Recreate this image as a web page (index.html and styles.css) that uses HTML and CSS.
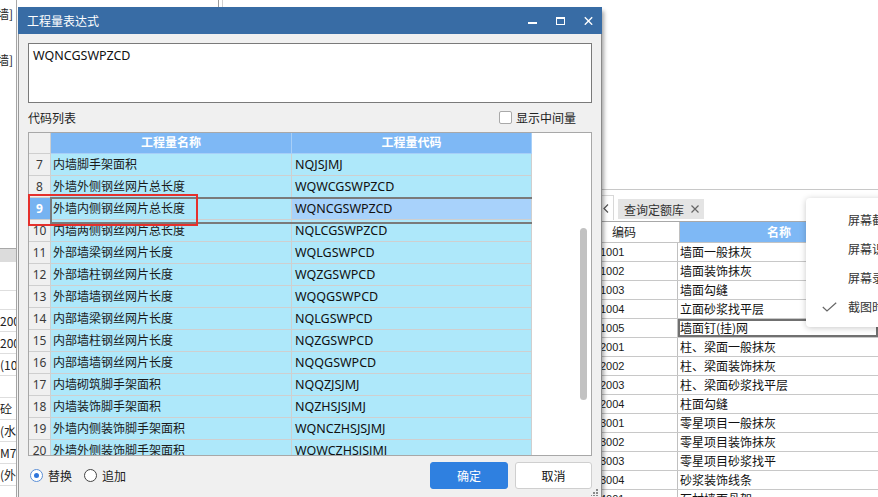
FILE: index.html
```html
<!DOCTYPE html>
<html lang="zh-CN">
<head>
<meta charset="utf-8">
<title>工程量表达式</title>
<link rel="stylesheet" href="styles.css">
</head>
<body>
<div class="desk">
  <div class="app-left">
    <div class="strip">
      <div class="s-txt s-t1">墙]</div>
      <div class="s-txt s-t2">墙]</div>
      <div class="s-band"></div>
      <div class="s-row s-b1"></div>
      <div class="s-row s-b2"></div>
      <div class="s-row">200</div>
      <div class="s-row">200</div>
      <div class="s-row">(10</div>
      <div class="s-row"></div>
      <div class="s-row">砼</div>
      <div class="s-row">(水</div>
      <div class="s-row">M7</div>
      <div class="s-row">(外</div>
    </div>
    <div class="mid"><div class="splitter"></div></div>
  </div>
  <div class="app-right">
    <div class="rp-top"></div>
    <div class="tabs">
      <div class="tab-prev"><svg width="6" height="9" viewBox="0 0 6 9"><polyline points="5,0.5 1,4.5 5,8.5" fill="none" stroke="#555" stroke-width="1.2"/></svg></div>
      <div class="tab"><span>查询定额库</span><svg class="tab-x" width="8" height="8" viewBox="0 0 8 8"><path d="M0.5 0.5 L7.5 7.5 M7.5 0.5 L0.5 7.5" stroke="#666" stroke-width="1.2"/></svg></div>
    </div>
    <div class="qtable">
      <div class="qhead"><div class="q1">编码</div><div class="q2">名称</div></div>
      <div class="qrow"><div class="q1">1001</div><div class="q2">墙面一般抹灰</div></div>
      <div class="qrow"><div class="q1">1002</div><div class="q2">墙面装饰抹灰</div></div>
      <div class="qrow"><div class="q1">1003</div><div class="q2">墙面勾缝</div></div>
      <div class="qrow"><div class="q1">1004</div><div class="q2">立面砂浆找平层</div></div>
      <div class="qrow qsel"><div class="q1">1005</div><div class="q2">墙面钉(挂)网</div></div>
      <div class="qrow"><div class="q1">2001</div><div class="q2">柱、梁面一般抹灰</div></div>
      <div class="qrow"><div class="q1">2002</div><div class="q2">柱、梁面装饰抹灰</div></div>
      <div class="qrow"><div class="q1">2003</div><div class="q2">柱、梁面砂浆找平层</div></div>
      <div class="qrow"><div class="q1">2004</div><div class="q2">柱面勾缝</div></div>
      <div class="qrow"><div class="q1">3001</div><div class="q2">零星项目一般抹灰</div></div>
      <div class="qrow"><div class="q1">3002</div><div class="q2">零星项目装饰抹灰</div></div>
      <div class="qrow"><div class="q1">3003</div><div class="q2">零星项目砂浆找平</div></div>
      <div class="qrow"><div class="q1">3004</div><div class="q2">砂浆装饰线条</div></div>
      <div class="qrow"><div class="q1">4001</div><div class="q2">石材墙面骨架</div></div>
    </div>
  </div>
</div>

<div class="dialog">
  <div class="titlebar">
    <span class="title">工程量表达式</span>
    <div class="wctl">
      <svg width="9" height="9" viewBox="0 0 9 9"><rect x="0" y="6" width="9" height="2" fill="#fff"/></svg>
      <svg width="9" height="9" viewBox="0 0 9 9"><rect x="0.5" y="1.5" width="8" height="7" fill="none" stroke="#fff"/><rect x="0" y="1" width="9" height="2" fill="#fff"/></svg>
      <svg width="9" height="9" viewBox="0 0 9 9"><path d="M0.8 1.3 L8.2 8.7 M8.2 1.3 L0.8 8.7" stroke="#fff" stroke-width="1.4"/></svg>
    </div>
  </div>
  <div class="dbody">
    <div class="expr">WQNCGSWPZCD</div>
    <div class="lrow">
      <span>代码列表</span>
      <label class="cbl"><span class="cb"></span><span>显示中间量</span></label>
    </div>
    <div class="grid">
      <div class="gcols">
        <div class="grow ghead"><div class="c-n"></div><div class="c-name">工程量名称</div><div class="c-code">工程量代码</div></div>
        <div class="gbody">
          <div class="grow"><div class="c-n">7</div><div class="c-name">内墙脚手架面积</div><div class="c-code">NQJSJMJ</div></div>
          <div class="grow"><div class="c-n">8</div><div class="c-name">外墙外侧钢丝网片总长度</div><div class="c-code">WQWCGSWPZCD</div></div>
          <div class="grow sel"><div class="c-n">9</div><div class="c-name">外墙内侧钢丝网片总长度</div><div class="c-code">WQNCGSWPZCD</div></div>
          <div class="grow"><div class="c-n">10</div><div class="c-name">内墙两侧钢丝网片总长度</div><div class="c-code">NQLCGSWPZCD</div></div>
          <div class="grow"><div class="c-n">11</div><div class="c-name">外部墙梁钢丝网片长度</div><div class="c-code">WQLGSWPCD</div></div>
          <div class="grow"><div class="c-n">12</div><div class="c-name">外部墙柱钢丝网片长度</div><div class="c-code">WQZGSWPCD</div></div>
          <div class="grow"><div class="c-n">13</div><div class="c-name">外部墙墙钢丝网片长度</div><div class="c-code">WQQGSWPCD</div></div>
          <div class="grow"><div class="c-n">14</div><div class="c-name">内部墙梁钢丝网片长度</div><div class="c-code">NQLGSWPCD</div></div>
          <div class="grow"><div class="c-n">15</div><div class="c-name">内部墙柱钢丝网片长度</div><div class="c-code">NQZGSWPCD</div></div>
          <div class="grow"><div class="c-n">16</div><div class="c-name">内部墙墙钢丝网片长度</div><div class="c-code">NQQGSWPCD</div></div>
          <div class="grow"><div class="c-n">17</div><div class="c-name">内墙砌筑脚手架面积</div><div class="c-code">NQQZJSJMJ</div></div>
          <div class="grow"><div class="c-n">18</div><div class="c-name">内墙装饰脚手架面积</div><div class="c-code">NQZHSJSJMJ</div></div>
          <div class="grow"><div class="c-n">19</div><div class="c-name">外墙内侧装饰脚手架面积</div><div class="c-code">WQNCZHSJSJMJ</div></div>
          <div class="grow"><div class="c-n">20</div><div class="c-name">外墙外侧装饰脚手架面积</div><div class="c-code">WQWCZHSJSJMJ</div></div>
        </div>
      </div>
      <div class="gside"><div class="thumb"></div></div>
      <div class="redbox"></div>
    </div>
    <div class="dfoot">
      <div class="radios">
        <label class="radio"><span class="rc on"></span><span>替换</span></label>
        <label class="radio"><span class="rc"></span><span>追加</span></label>
      </div>
      <div class="btns">
        <button class="btn primary">确定</button>
        <button class="btn">取消</button>
      </div>
    </div>
  </div>
  <svg class="grip" width="7" height="7" viewBox="0 0 7 7"><rect x="5" y="0" width="2" height="2" fill="#8a8a8a"/><rect x="2" y="3" width="2" height="2" fill="#8a8a8a"/><rect x="5" y="3" width="2" height="2" fill="#8a8a8a"/><rect x="-1" y="6" width="2" height="2" fill="#8a8a8a"/><rect x="2" y="6" width="2" height="2" fill="#8a8a8a"/><rect x="5" y="6" width="2" height="2" fill="#8a8a8a"/></svg>
</div>

<div class="menu">
  <div class="mi">屏幕截图</div>
  <div class="mi">屏幕识图</div>
  <div class="mi">屏幕录制</div>
  <div class="mi"><svg class="chk" width="15" height="10" viewBox="0 0 15 10"><polyline points="0.8,5 5,9 14.2,0.8" fill="none" stroke="#666" stroke-width="1.2"/></svg>截图时隐藏窗口</div>
</div>
</body>
</html>
```
FILE: styles.css
```css
* { box-sizing: border-box; margin: 0; padding: 0; }
html, body { width: 878px; height: 497px; overflow: hidden; }
body {
  position: relative;
  background: #fff;
  font-family: "Noto Sans", "Noto Sans CJK SC", sans-serif;
  font-size: 12px;
  color: #1a1a1a;
}

/* background application */
.desk { display: flex; width: 878px; height: 497px; }
.app-left { width: 602px; flex: none; display: flex; }
.strip {
  width: 17px; flex: none;
  border-right: 1px solid #a8a8a8;
  overflow: hidden;
  display: flex; flex-direction: column;
  font-family: "Noto Sans CJK SC", sans-serif;
  font-size: 12px; color: #222;
}
.s-txt { height: 14px; line-height: 14px; display: flex; justify-content: flex-end; white-space: nowrap; padding-right: 3px; flex: none; overflow: hidden; }
.s-t1 { margin-top: 7px; }
.s-t2 { margin-top: 32px; }
.s-band { margin-top: 181px; height: 14px; flex: none; background: #dcdcdc; border-top: 1px solid #a8a8a8; }
.s-row { height: 22px; flex: none; line-height: 21px; border-bottom: 1px solid #dedede; white-space: nowrap; overflow: hidden; }
.s-b1 { height: 29px; }
.s-b2 { height: 19px; }
.mid { flex: 1; display: flex; }
.splitter { margin-left: 201px; width: 5px; height: 100%; border-left: 1px solid #9c9c9c; border-right: 1px solid #d0d0d0; }

.app-right { width: 276px; flex: none; display: flex; flex-direction: column; overflow: hidden; font-family: "Noto Sans CJK SC", sans-serif; }
.rp-top { height: 190px; flex: none; border-bottom: 1px solid #c8c8c8; }
.tabs { height: 31px; flex: none; display: flex; align-items: flex-start; padding-top: 5px; }
.tab-prev { width: 12px; height: 25px; flex: none; border: 1px solid #d8d8d8; border-left: none; border-bottom: none; display: flex; align-items: center; padding-left: 1px; }
.tab { margin-left: 4px; margin-top: 4px; width: 86px; height: 20px; background: #e4e4e4; display: flex; align-items: center; padding-left: 6px; color: #333; font-size: 12px; }
.tab-x { margin-left: 7px; }
.qtable { flex: 1; display: flex; flex-direction: column; overflow: hidden; }
.qhead { height: 22px; flex: none; display: flex; border-top: 1px solid #a8a8a8; border-bottom: 1px solid #c4c4c4; }
.qhead .q1 { padding-left: 10px; color: #222; line-height: 20px; }
.qhead .q2 { background: #7eb8f5; color: #fff; font-weight: 700; text-align: center; line-height: 20px; padding-left: 0; }
.q1 { width: 78px; flex: none; border-right: 1px solid #c0c0c0; font-family: "Liberation Sans", sans-serif; font-size: 11px; line-height: 18px; margin-left: -2px; }
.qhead .q1 { font-family: "Noto Sans CJK SC", sans-serif; font-size: 12px; margin-left: 0; width: 78px; }
.q2 { flex: 1; padding-left: 2px; font-size: 12px; line-height: 18px; color: #111; }
.qrow { height: 19px; flex: none; display: flex; border-bottom: 1px solid #c8c8c8; }
.qsel .q2 { box-shadow: inset 0 0 0 2px #707070; }

/* dialog window */
.dialog {
  position: absolute; left: 18px; top: 7px;
  width: 584px; height: 490px;
  background: #f0f0f0;
  box-shadow: 2px 4px 4px rgba(0,0,0,0.35);
}
.titlebar { height: 27px; background: #386ca5; color: #fff; display: flex; align-items: center; padding: 0 9px; }
.title { font-family: "Noto Sans CJK SC", sans-serif; font-size: 12px; }
.wctl { margin-left: auto; display: flex; gap: 19px; align-items: center; }
.wctl svg { display: block; }
.dbody { height: 463px; border-left: 1px solid #9a9a9a; border-right: 1px solid #8a8a8a; padding: 9px 9px 0; display: flex; flex-direction: column; }
.expr { height: 60px; flex: none; border: 1px solid #7a7a7a; background: #fff; padding: 3px 4px; font-size: 12.5px; line-height: 18px; color: #111; }
.lrow { height: 29px; flex: none; display: flex; align-items: center; justify-content: space-between; padding-right: 16px; color: #222; }
.cbl { display: flex; align-items: center; gap: 4px; }
.cb { width: 13px; height: 13px; border: 1px solid #a9a9a9; border-radius: 2px; background: #fff; }

.grid { position: relative; flex: none; height: 324px; display: flex; border: 1px solid #a8a8a8; background: #fff; }
.gcols { width: 503px; flex: none; display: flex; flex-direction: column; overflow: hidden; }
.grow { display: grid; grid-template-columns: 22px 241px 240px; height: 22px; flex: none; }
.grow > div { border-right: 1px solid #cfcfcf; border-bottom: 1px solid #cfcfcf; line-height: 21px; white-space: nowrap; overflow: hidden; }
.c-n { background: #f0f0f0; color: #3a3a3a; text-align: center; font-size: 12px; }
.c-name { background: #aee8fa; padding-left: 2px; color: #1a1a1a; }
.c-code { background: #aee8fa; padding-left: 3px; font-size: 12.5px; color: #111; }
.ghead { height: 21px; }
.ghead > div { line-height: 20px; }
.ghead .c-name, .ghead .c-code { background: #7eb8f5; border-color: #a7cff8; color: #fff; font-weight: 700; text-align: center; padding-left: 0; font-size: 12px; }
.gbody { flex: 1; display: flex; flex-direction: column; overflow: hidden; }
.sel { position: relative; }
.sel .c-n { background: #76b3f1; color: #fff; font-weight: 700; }
.sel .c-code { background: #a8d2fb; }
.sel::after { content: ""; position: absolute; left: 21px; top: -1px; width: 482px; height: 23px; border: 2px solid #7a7a7a; pointer-events: none; }
.gside { flex: 1; }
.thumb { margin: 95px 0 0 48px; width: 7px; height: 172px; border-radius: 4px; background: #c2c2c2; }
.redbox { position: absolute; left: -1px; top: 61px; width: 170px; height: 32px; border: 2px solid #e5302c; pointer-events: none; }

.dfoot { margin-top: 6px; height: 27px; flex: none; display: flex; align-items: center; justify-content: space-between; }
.radios { display: flex; align-items: center; gap: 12px; padding-left: 2px; color: #222; }
.radio { display: flex; align-items: center; gap: 5px; }
.rc { width: 13px; height: 13px; border-radius: 50%; border: 1px solid #444; background: #fff; display: flex; align-items: center; justify-content: center; }
.rc.on { border-color: #5b8fd6; }
.rc.on::after { content: ""; width: 5px; height: 5px; border-radius: 50%; background: #2f76dc; }
.btns { display: flex; gap: 7px; }
.btn { height: 27px; border-radius: 3px; font-family: "Noto Sans CJK SC", sans-serif; font-size: 12px; }
.btn.primary { width: 78px; background: #2f80e0; border: 1px solid #2f80e0; color: #fff; }
.btn:not(.primary) { width: 77px; background: #fff; border: 1px solid #cfcfcf; color: #111; }
.grip { position: absolute; right: 4px; bottom: 1px; }

/* context menu */
.menu {
  position: absolute; left: 806px; top: 198px;
  width: 90px; height: 129px;
  background: #fff; border-radius: 4px;
  box-shadow: 0 1px 6px rgba(0,0,0,0.22);
  padding-top: 7px;
  font-family: "Noto Sans CJK SC", sans-serif; font-size: 12px; color: #333;
}
.mi { height: 29px; display: flex; align-items: center; padding-left: 42px; white-space: nowrap; position: relative; }
.chk { position: absolute; left: 16px; top: 10px; }
```
